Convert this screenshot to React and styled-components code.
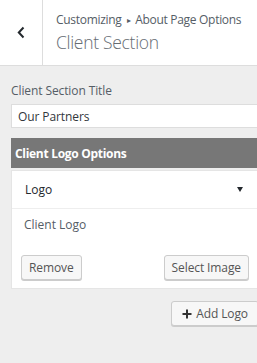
import React from 'react'
import styled, { createGlobalStyle } from 'styled-components'

const GlobalStyle = createGlobalStyle`
  html, body {
    margin: 0;
    padding: 0;
    background: #eeeeee;
    overflow: hidden;
  }
  body {
    width: 257px;
    height: 363px;
    font-family: "Open Sans", "Noto Sans", sans-serif;
    font-size: 12px;
    color: #555d66;
  }
`

const Header = styled.div`
  display: flex;
  height: 65px;
  background: #fff;
  border-bottom: 1px solid #dddddd;
`

const BackButton = styled.div`
  width: 42px;
  flex: none;
  display: flex;
  align-items: center;
  justify-content: center;
  border-right: 1px solid #dddddd;
  color: #23282d;
`

const TitleBlock = styled.div`
  padding: 11px 0 0 13px;
  white-space: nowrap;
`

const Crumb = styled.div`
  font-size: 12px;
  line-height: 18px;
  color: #555d66;
  letter-spacing: -0.3px;
`

const Sep = styled.span`
  display: inline-block;
  font-size: 8px;
  margin: 0 5px;
  vertical-align: 1px;
`

const PageTitle = styled.div`
  font-size: 17.5px;
  font-weight: 300;
  line-height: 26px;
  color: #666c73;
  letter-spacing: -0.3px;
`

const Content = styled.div`
  padding: 16px 0 0 11px;
  width: 248px;
`

const Label = styled.div`
  font-size: 12px;
  line-height: 18px;
  color: #555d66;
  margin-bottom: 4px;
  letter-spacing: -0.1px;
`

const TextBox = styled.div`
  height: 22px;
  background: #fff;
  border: 1px solid #dddddd;
  padding-left: 6px;
  display: flex;
  align-items: center;
  color: #32373c;
  font-size: 12px;
  letter-spacing: -0.1px;
`

const GroupBar = styled.div`
  margin-top: 10px;
  height: 30px;
  background: #777777;
  color: #fff;
  font-weight: 700;
  font-size: 12px;
  display: flex;
  align-items: center;
  padding-left: 4px;
  letter-spacing: -0.3px;
`

const Card = styled.div`
  margin-top: 2px;
  background: #fff;
  border: 1px solid #e5e5e5;
`

const CardHead = styled.div`
  height: 37px;
  display: flex;
  align-items: center;
  justify-content: space-between;
  padding: 0 15px 0 13px;
  border-bottom: 1px solid #eeeeee;
  color: #23282d;
  font-size: 12px;
`

const Caret = styled.span`
  width: 0;
  height: 0;
  border-left: 3.5px solid transparent;
  border-right: 3.5px solid transparent;
  border-top: 5px solid #23282d;
`

const CardBody = styled.div`
  padding: 7px 9px 8px 9px;
`

const FieldName = styled.div`
  padding-left: 3px;
  line-height: 18px;
  color: #555d66;
  font-size: 12px;
`

const ButtonRow = styled.div`
  margin-top: 21px;
  display: flex;
  justify-content: space-between;
`

const Button = styled.div`
  height: 23px;
  padding: 0 ${p => p.$pad || 7}px;
  display: inline-flex;
  align-items: center;
  gap: 4px;
  background: #f7f7f7;
  border: 1px solid #cccccc;
  border-radius: 3px;
  box-shadow: 0 1px 0 #cccccc;
  color: #555555;
  font-size: 12px;
  letter-spacing: -0.1px;
  white-space: nowrap;
`

const AddRow = styled.div`
  margin-top: 12px;
  display: flex;
  justify-content: flex-end;
`

export default function App() {
  return (
    <>
      <GlobalStyle />
      <Header>
        <BackButton>
          <svg width="8" height="13" viewBox="0 0 8 13">
            <polyline points="6.5,1.5 1.8,6.5 6.5,11.5" fill="none" stroke="#23282d" strokeWidth="2" />
          </svg>
        </BackButton>
        <TitleBlock>
          <Crumb>Customizing<Sep>▸</Sep>About Page Options</Crumb>
          <PageTitle>Client Section</PageTitle>
        </TitleBlock>
      </Header>
      <Content>
        <Label>Client Section Title</Label>
        <TextBox>Our Partners</TextBox>
        <GroupBar>Client Logo Options</GroupBar>
        <Card>
          <CardHead>
            <span>Logo</span>
            <Caret />
          </CardHead>
          <CardBody>
            <FieldName>Client Logo</FieldName>
            <ButtonRow>
              <Button>Remove</Button>
              <Button>Select Image</Button>
            </ButtonRow>
          </CardBody>
        </Card>
        <AddRow>
          <Button $pad={10}>
            <svg width="10" height="10" viewBox="0 0 10 10">
              <path d="M5 0.5v9M0.5 5h9" stroke="#333" strokeWidth="2" />
            </svg>
            Add Logo
          </Button>
        </AddRow>
      </Content>
    </>
  )
}
